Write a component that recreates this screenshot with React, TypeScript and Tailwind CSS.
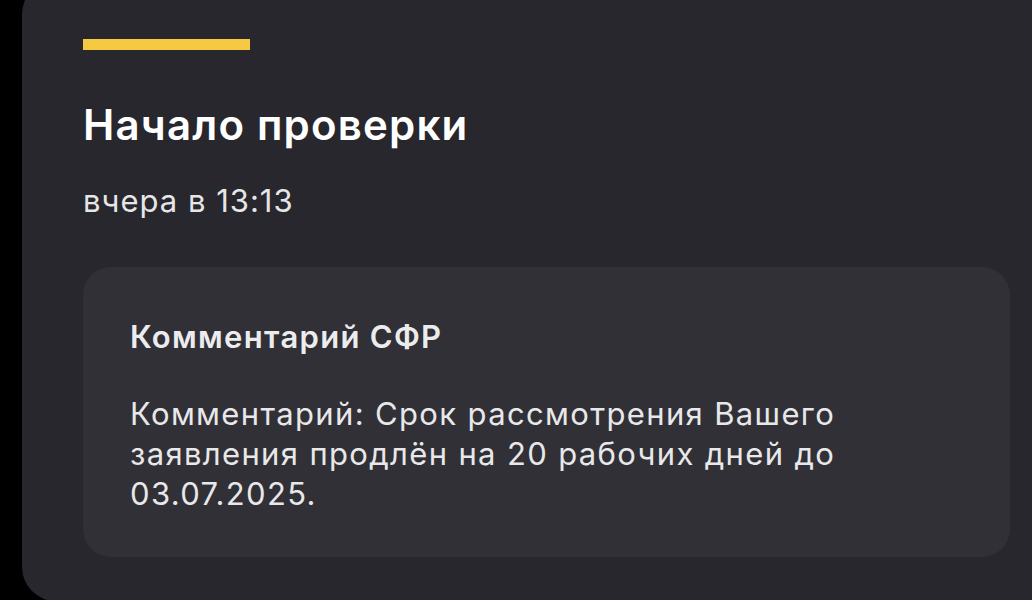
export default function App() {
  return (
    <div
      className="w-[1032px] h-[600px] bg-black overflow-hidden pl-[22px]"
      style={{ fontFamily: 'Inter, "Noto Sans", sans-serif' }}
    >
      <div className="-mt-[20px] w-[1040px] h-[621px] rounded-[34px] bg-[#27272d] pl-[61px] pt-[59px]">
        <div className="w-[167px] h-[11px] bg-[#f6c942]" />
        <h1 className="mt-[50px] text-[42px] leading-[50px] font-semibold text-white tracking-[1.2px]">
          Начало проверки
        </h1>
        <div className="mt-[33px] text-[31px] leading-[36px] text-[#e6e6e8] tracking-[1px]">вчера в 13:13</div>
        <div className="mt-[48px] w-[927px] rounded-[28px] bg-[#303036] pl-[47px] pt-[52px] pb-[43px]">
          <div className="text-[31px] leading-[36px] font-semibold text-[#ececee] tracking-[1.3px]">
            Комментарий СФР
          </div>
          <div className="mt-[39px] text-[31px] leading-[40px] text-[#e8e8ea] w-[770px] tracking-[1.35px]">
            Комментарий: Срок рассмотрения Вашего заявления продлён на 20 рабочих дней до 03.07.2025.
          </div>
        </div>
      </div>
    </div>
  );
}
